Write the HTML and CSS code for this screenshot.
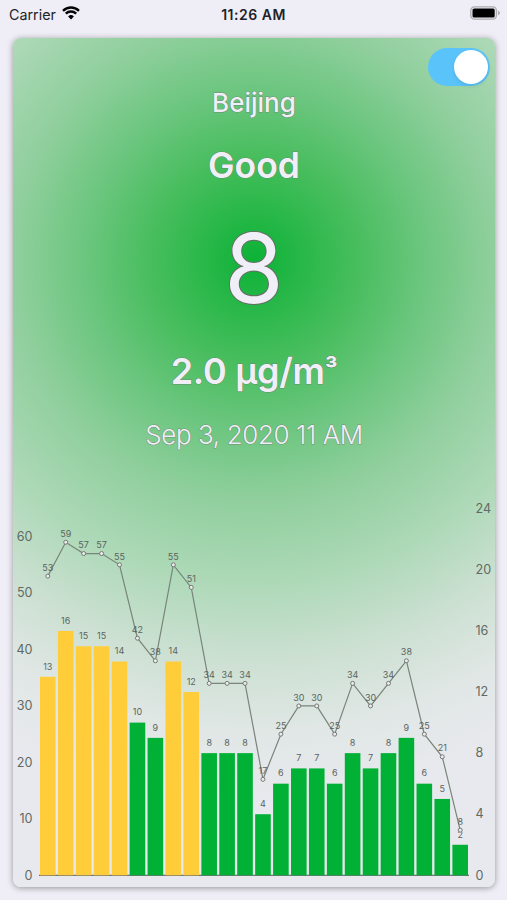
FILE: index.html
```html
<!DOCTYPE html>
<html lang="en">
<head>
  <meta charset="utf-8">
  <title>Air quality</title>
  <link rel="stylesheet" href="styles.css">
</head>
<body>
  <header class="status">
    <div class="carrier">
      <span>Carrier</span>
      <svg class="wifi" viewBox="0 0 18 14" width="18" height="14">
        <path d="M1 4.8a11.5 11.5 0 0 1 16 0" />
        <path d="M3.8 7.7a7.4 7.4 0 0 1 10.4 0" />
        <path class="dot" d="M9 13.4 6.1 10.4a4.1 4.1 0 0 1 5.8 0z" />
      </svg>
    </div>
    <div class="time">11:26 AM</div>
    <svg class="battery" viewBox="0 0 31 14" width="31" height="14">
      <rect class="shell" x="0.8" y="0.8" width="25.6" height="12.4" rx="3.6" />
      <rect x="2.5" y="2.5" width="22.2" height="9" rx="1.6" />
      <path class="cap" d="M28 4.8c2.6 1 2.6 3.4 0 4.4z" />
    </svg>
  </header>
  <main class="card">
    <div class="switch"><span class="knob"></span></div>
    <section class="reading">
      <div class="city">Beijing</div>
      <div class="level">Good</div>
      <div class="aqi">8</div>
      <div class="pm">2.0 µg/m<span class="cube">³</span></div>
      <div class="date">Sep 3, 2020 11 AM</div>
    </section>
    <svg id="chart" class="chart" viewBox="0 0 482 397" width="482" height="397"></svg>
  </main>
<script src="chart.js"></script>
</body>
</html>
```
FILE: styles.css
```css
body {
  margin: 0;
  height: 900px;
  overflow: hidden;
  background: #efeef6;
  font-family: Inter, "Liberation Sans", sans-serif;
}
.status {
  display: grid;
  grid-template-columns: 1fr auto 1fr;
  align-items: center;
  height: 28px;
  padding: 0 6px 0 9px;
  font-size: 14.3px;
  color: #222226;
}
.carrier {
  display: flex;
  align-items: center;
  gap: 6px;
}
.wifi {
  margin-top: -2px;
  fill: none;
  stroke: #050508;
  stroke-width: 2.4;
}
.wifi .dot {
  fill: #050508;
  stroke: none;
}
.time {
  margin-right: 3px;
  font-weight: 600;
  font-size: 14px;
  letter-spacing: .5px;
}
.battery {
  justify-self: end;
  margin-top: -2px;
}
.battery .shell {
  fill: none;
  stroke: #aaaaaf;
  stroke-width: 1.3;
}
.battery .cap {
  fill: #aaaaaf;
}
.card {
  position: relative;
  display: flex;
  flex-direction: column;
  justify-content: space-between;
  width: 482px;
  height: 849px;
  margin: 10px 0 0 13px;
  border-radius: 8px;
  background: radial-gradient(circle 540px at 50% 222px, #0cb236 0, #46bd5c 100px, #6cc67f 170px, #90cf9d 240px, #aed9b8 325px, #cce0d2 400px, #e0e7e5 470px, #e8e9ee 540px);
  box-shadow: 0 1px 6px rgba(0, 0, 0, .38);
}
.switch {
  position: absolute;
  top: 10px;
  right: 5px;
  width: 62px;
  height: 38px;
  border-radius: 19px;
  background: #5ac4fa;
}
.knob {
  position: absolute;
  top: 2px;
  right: 2px;
  width: 34px;
  height: 34px;
  border-radius: 50%;
  background: #fff;
  box-shadow: 0 2px 4px rgba(0, 0, 0, .1);
}
.reading {
  display: flex;
  flex-direction: column;
  align-items: center;
  color: #f0eff7;
  -webkit-text-stroke: 1px rgba(115, 115, 115, .7);
  paint-order: stroke fill;
}
.city {
  margin-top: 49px;
  font-size: 26px;
  line-height: 32px;
  font-weight: 500;
}
.level {
  margin-top: 25px;
  font-size: 35.5px;
  line-height: 44px;
  font-weight: 600;
}
.aqi {
  margin-top: 27px;
  font-size: 96px;
  line-height: 106px;
  -webkit-text-stroke: 2px #696b69;
}
.pm {
  margin-top: 28px;
  font-size: 36px;
  line-height: 44px;
  font-weight: 600;
  letter-spacing: -.3px;
}
.cube {
  font-size: 28px;
  line-height: 1;
  vertical-align: 4px;
}
.date {
  margin-top: 26px;
  font-size: 26px;
  line-height: 32px;
  font-weight: 300;
  letter-spacing: -.4px;
}
.chart {
  display: block;
}
.chart text {
  text-anchor: middle;
  fill: #5c645f;
  font-size: 9px;
}
.chart .tick {
  font-size: 12.6px;
  fill: #5f6a64;
}
.chart .left {
  text-anchor: end;
}
.chart .right {
  text-anchor: start;
}
.good {
  fill: #00b135;
}
.moderate {
  fill: #ffcd3a;
}
.line {
  fill: none;
  stroke: #78857b;
  stroke-width: 1.2;
}
.point {
  fill: #e9eeec;
  stroke: #777;
  stroke-width: 1;
}
.base {
  stroke: #555;
  stroke-width: 1;
}
```
FILE: chart.js
```js
const pm = [13, 16, 15, 15, 14, 10, 9, 14, 12, 8, 8, 8, 4, 6, 7, 7, 6, 8, 7, 8, 9, 6, 5, 2]
const aqi = [53, 59, 57, 57, 55, 42, 38, 55, 51, 34, 34, 34, 17, 25, 30, 30, 25, 34, 30, 34, 38, 25, 21, 8]

const base = 385.3
const barWidth = 15.6
const x = (i) => 34.8 + i * 17.93
const yPm = (v) => base - v * 15.27
const yAqi = (v) => base - v * 5.645

let parts = []

// axis labels on both sides
for (let v = 0; v <= 60; v += 10) {
  parts.push(`<text class="tick left" x="19.5" y="${yAqi(v) + 4.2}">${v}</text>`)
}
for (let v = 0; v <= 24; v += 4) {
  parts.push(`<text class="tick right" x="462.5" y="${yPm(v) + 4.2}">${v}</text>`)
}

// baseline and bars
parts.push(`<line class="base" x1="26" y1="${base}" x2="456" y2="${base}" />`)
pm.forEach((v, i) => {
  let level = v > 11 ? 'moderate' : 'good'
  parts.push(`<rect class="${level}" x="${x(i) - barWidth / 2}" y="${yPm(v)}" width="${barWidth}" height="${base - yPm(v)}" />`)
  parts.push(`<text x="${x(i)}" y="${yPm(v) - 7.2}">${v}</text>`)
})

// index line with its points
parts.push(`<polyline class="line" points="${aqi.map((v, i) => x(i) + ',' + yAqi(v)).join(' ')}" />`)
aqi.forEach((v, i) => {
  parts.push(`<circle class="point" cx="${x(i)}" cy="${yAqi(v)}" r="2" />`)
  parts.push(`<text x="${x(i)}" y="${yAqi(v) - 5.3}">${v}</text>`)
})

document.getElementById('chart').innerHTML = parts.join('\n')
```
